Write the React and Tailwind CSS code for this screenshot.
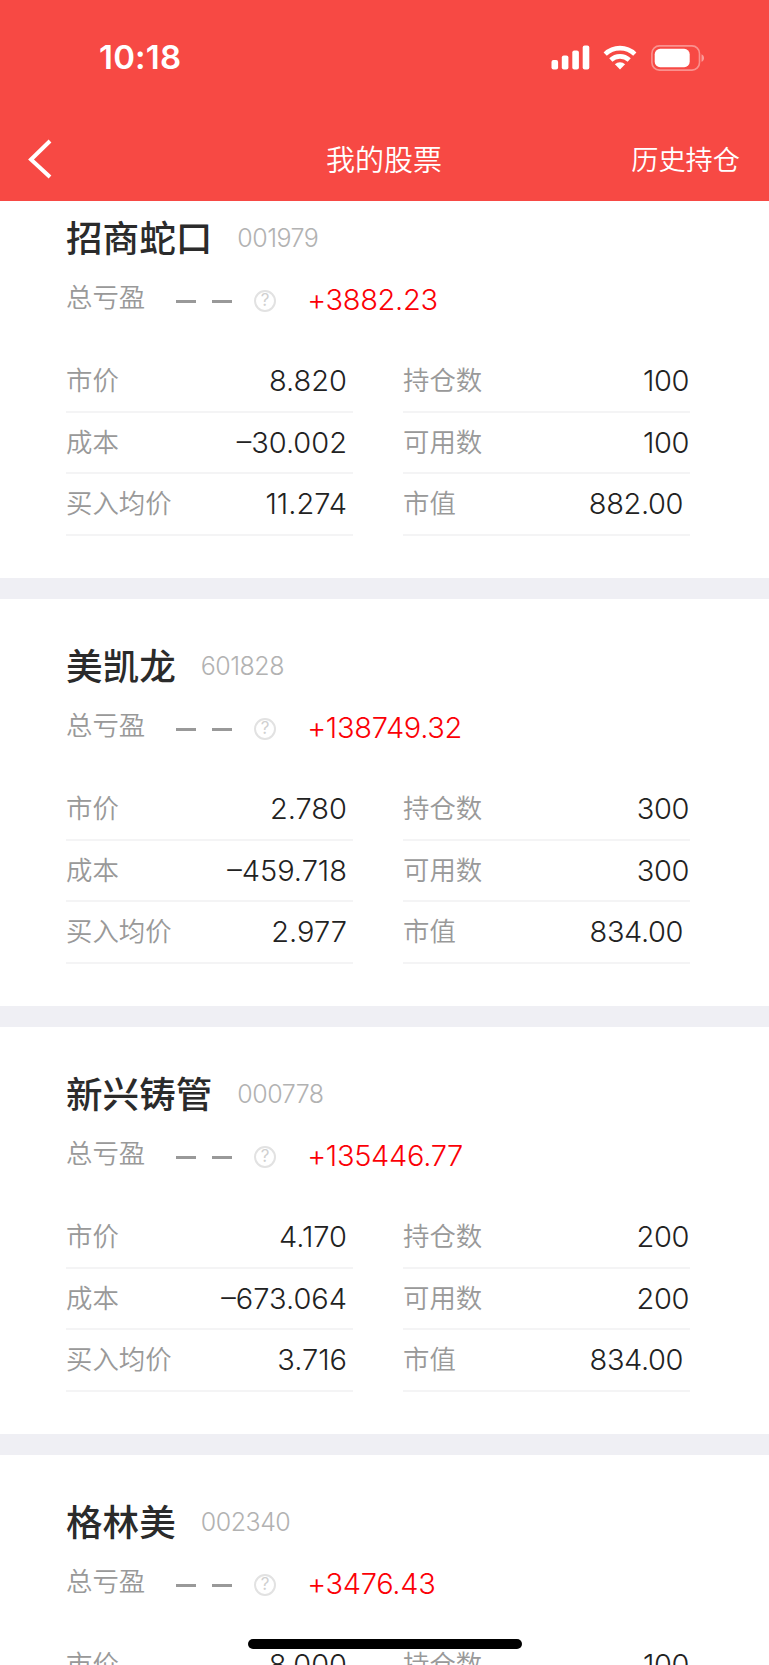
const holdings = [
  {
    name: "招商蛇口",
    code: "001979",
    profit: "+3882.23",
    left: [["市价", "8.820"], ["成本", "–30.002"], ["买入均价", "11.274"]],
    right: [["持仓数", "100"], ["可用数", "100"], ["市值", "882.00"]],
  },
  {
    name: "美凯龙",
    code: "601828",
    profit: "+138749.32",
    left: [["市价", "2.780"], ["成本", "–459.718"], ["买入均价", "2.977"]],
    right: [["持仓数", "300"], ["可用数", "300"], ["市值", "834.00"]],
  },
  {
    name: "新兴铸管",
    code: "000778",
    profit: "+135446.77",
    left: [["市价", "4.170"], ["成本", "–673.064"], ["买入均价", "3.716"]],
    right: [["持仓数", "200"], ["可用数", "200"], ["市值", "834.00"]],
  },
  {
    name: "格林美",
    code: "002340",
    profit: "+3476.43",
    left: [["市价", "8.000"]],
    right: [["持仓数", "100"]],
  },
];

function StatusBar() {
  return (
    <div className="flex h-[115px] items-center justify-between pl-[99px] pr-[64px]">
      <span className="text-[33px] font-semibold leading-none tracking-[0.2px]">
        10:18
      </span>
      <div className="flex items-center">
        <svg width="39" height="25" viewBox="0 0 39 25" fill="currentColor">
          <rect x="0.5" y="15" width="6.6" height="9.5" rx="2" />
          <rect x="10.8" y="10.5" width="6.6" height="14" rx="2" />
          <rect x="21.3" y="5.5" width="6.6" height="19" rx="2" />
          <rect x="31.7" y="0.5" width="6.6" height="24" rx="2" />
        </svg>
        <svg
          className="ml-[13px]"
          width="34"
          height="25"
          viewBox="0 0 34 25"
          fill="none"
          stroke="currentColor"
          strokeWidth="4.6"
        >
          <path d="M2.2 9.1a21.2 21.2 0 0 1 29.6 0" />
          <path d="M7.8 15a13.4 13.4 0 0 1 18.4 0" />
          <path
            d="M17 24.5l-5.1-5.2a7.4 7.4 0 0 1 10.2 0z"
            fill="currentColor"
            stroke="none"
          />
        </svg>
        <svg className="ml-[14px]" width="54" height="26" viewBox="0 0 54 26">
          <rect
            x="0.9"
            y="0.9"
            width="47.6"
            height="24.2"
            rx="7.5"
            fill="none"
            stroke="#fff"
            strokeOpacity="0.4"
            strokeWidth="1.6"
          />
          <rect x="3.7" y="3.8" width="35" height="18.4" rx="5.5" fill="#fff" />
          <path
            d="M50.5 9.2c3.4 1.4 3.4 6.2 0 7.6z"
            fill="#fff"
            fillOpacity="0.45"
          />
        </svg>
      </div>
    </div>
  );
}

function Header() {
  return (
    <header className="relative z-10 h-[201px] bg-[#f74944] text-white">
      <StatusBar />
      <div className="grid h-[88px] grid-cols-3 items-center pl-[28px] pr-[29px]">
        <svg
          width="24"
          height="40"
          viewBox="0 0 24 40"
          fill="none"
          stroke="currentColor"
          strokeWidth="4"
        >
          <path d="M22 2L3 20.5L22 38" />
        </svg>
        <h1 className="pt-[3px] text-center text-[29px] font-[350] leading-none">
          我的股票
        </h1>
        <span className="pt-[3px] text-right text-[27.2px] font-[350] leading-none">
          历史持仓
        </span>
      </div>
    </header>
  );
}

function Row({ label, value, valueClass }) {
  return (
    <div className="flex h-[61.6px] items-center justify-between border-b-2 border-[#f4f4f5]">
      <span className="text-[26.4px] font-[350] text-[#999]">{label}</span>
      <span className={`text-[29px] font-[350] text-[#222] ${valueClass}`}>
        {value}
      </span>
    </div>
  );
}

function HoldingCard({ item }) {
  return (
    <section className="h-[428px] border-b-[21px] border-[#efeff4] px-[66px] pt-[37px]">
      <div className="flex h-[60px] items-center">
        <h2 className="pt-[2px] text-[36.6px] font-medium leading-none text-[#2b2b2b]">
          {item.name}
        </h2>
        <span className="ml-[25px] mt-px text-[25px] font-light leading-none tracking-[-0.5px] text-[#b2b2b2]">
          {item.code}
        </span>
      </div>
      <div className="flex h-[62px] items-center">
        <span className="pb-[4px] text-[26.4px] font-[350] leading-none text-[#999]">
          总亏盈
        </span>
        <span className="ml-[31px] mt-[5px] h-[3px] w-5 bg-[#999]" />
        <span className="ml-4 mt-[5px] h-[3px] w-5 bg-[#999]" />
        <span className="ml-[22px] mt-[3px] flex h-[22px] w-[22px] items-center justify-center rounded-full border-2 border-[#e2e2e2] text-[17px] leading-none text-[#d0d0d0]">
          ?
        </span>
        <span className="ml-[31px] text-[29px] font-[350] leading-none tracking-[-0.3px] text-[#fb0006]">
          {item.profit}
        </span>
      </div>
      <div className="mt-[21px] flex gap-[50px]">
        <div className="w-[287px]">
          {item.left.map(([label, value]) => (
            <Row
              key={label}
              label={label}
              value={value}
              valueClass="pr-[6px]"
            />
          ))}
        </div>
        <div className="w-[287px]">
          {item.right.map(([label, value]) => (
            <Row
              key={label}
              label={label}
              value={value}
              valueClass={
                label === "市值"
                  ? "pr-[7px] tracking-[-0.4px]"
                  : "pr-px tracking-[-0.4px]"
              }
            />
          ))}
        </div>
      </div>
    </section>
  );
}

export default function App() {
  return (
    <div className="relative h-[1665px] w-[769px] overflow-hidden bg-white font-[Inter,'Noto_Sans_CJK_SC',sans-serif]">
      <Header />
      <main className="-mt-[30px]">
        {holdings.map((item) => (
          <HoldingCard key={item.code} item={item} />
        ))}
      </main>
      <div className="absolute left-[248px] top-[1639px] h-[10px] w-[274px] rounded-full bg-black" />
    </div>
  );
}
